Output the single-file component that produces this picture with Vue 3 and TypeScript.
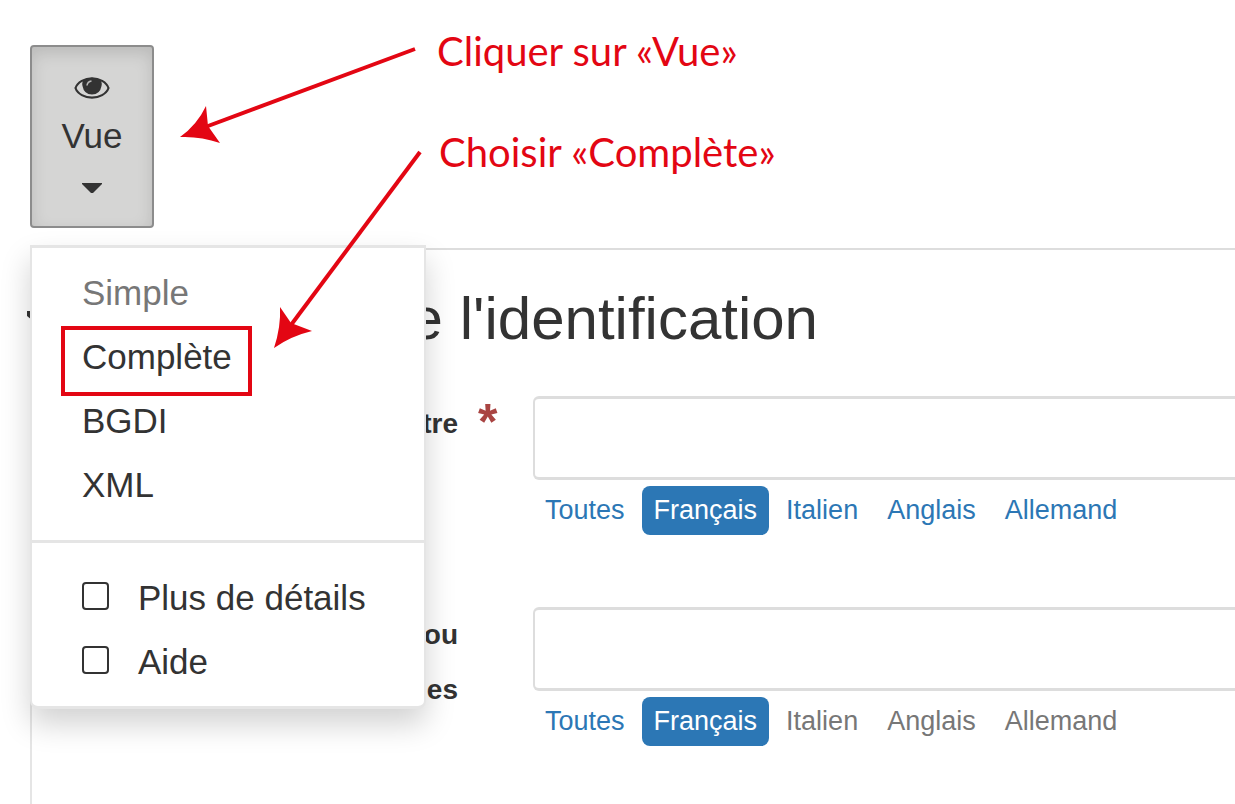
<script setup lang="ts">
import { ref } from 'vue'

interface Field {
  id: string
  lines: string[]
  required: boolean
  muted: boolean
}

const views: string[] = ['Simple', 'Complète', 'BGDI', 'XML']
const languages: string[] = ['Toutes', 'Français', 'Italien', 'Anglais', 'Allemand']
const fields: Field[] = [
  { id: 'title', lines: ['Titre'], required: true, muted: false },
  { id: 'other', lines: ['ou', 'es'], required: false, muted: true },
]
const values = ref<Record<string, string>>({ title: '', other: '' })
const details = ref(false)
const help = ref(false)
</script>

<template>
  <div class="page">
    <header class="toolbar">
      <div class="dropdown">
        <button class="view-button" type="button" aria-haspopup="true" aria-expanded="true">
          <svg class="eye" viewBox="0 0 36 22" aria-hidden="true">
            <path d="M1.500 11C3.500 5 11 1.300 18 1.300S32.500 5 34.500 11C32.500 17 25 20.700 18 20.700S3.500 17 1.500 11Z" fill="none" stroke="#333" stroke-width="2.200" />
            <path d="M10 2.500Q18 -1 26 2.500Q28.500 5 27.500 9Q26 17.500 18 17.500Q10 17.500 8.500 9Q7.500 5 10 2.500Z" fill="#333" />
            <path d="M13 8.500Q13.500 4.500 17.500 4" fill="none" stroke="#b8b8b8" stroke-width="1.600" />
          </svg>
          <span class="view-text">Vue</span>
          <svg class="caret" viewBox="0 0 20 10" aria-hidden="true"><path d="M0 0H20V1L11 10H9L0 1Z" fill="#333" /></svg>
        </button>
        <div class="menu">
          <a v-for="(view, i) in views" :key="view" href="#" class="menu-item" :class="{ current: i === 0 }">{{ view }}</a>
          <hr class="divider" />
          <label class="menu-item check"><input v-model="details" type="checkbox" />Plus de détails</label>
          <label class="menu-item check"><input v-model="help" type="checkbox" />Aide</label>
        </div>
      </div>
    </header>

    <main class="panel">
      <h1 class="legend">
        <svg class="legend-caret" viewBox="0 0 34 17" aria-hidden="true"><path d="M0 0H34V4L19 17H15L0 5Z" fill="#333" /></svg>
        <span class="legend-text">de l'identification</span>
      </h1>
      <div v-for="field in fields" :key="field.id" class="field">
        <label :for="field.id" class="field-label">
          <span v-for="line in field.lines" :key="line">{{ line }}</span>
        </label>
        <span class="star"><template v-if="field.required">*</template></span>
        <div class="control">
          <input :id="field.id" v-model="values[field.id]" type="text" class="text-input" />
          <nav class="pills">
            <a
              v-for="(language, i) in languages"
              :key="language"
              href="#"
              class="pill"
              :class="{ active: i === 1, muted: field.muted && i > 1 }"
            >{{ language }}</a>
          </nav>
        </div>
      </div>
    </main>

    <svg class="notes" width="800" height="420" viewBox="0 0 800 420">
      <g fill="none" stroke="#e30613" stroke-width="4">
        <path d="M415 49L200 129" />
        <path d="M420 152L288 329" />
        <rect x="63" y="328" width="187" height="66" />
      </g>
      <g fill="#e30613">
        <path d="M180 137Q197 125 206 106L208 126L220 143Q200 136 180 137Z" />
        <path d="M274 348Q281 327 280 307L291 323L312 331Q291 336 274 348Z" />
        <text x="437" y="66">Cliquer sur «Vue»</text>
        <text x="439" y="167">Choisir «Complète»</text>
      </g>
    </svg>
  </div>
</template>

<style>
body {
  margin: 0;
  background: #fff;
}
</style>

<style scoped>
.page {
  position: relative;
  display: flex;
  flex-direction: column;
  min-height: 100vh;
  overflow: hidden;
  box-sizing: border-box;
  color: #333;
  font-family: "Liberation Sans", Arial, sans-serif;
}
.toolbar {
  display: flex;
  padding: 45px 30px 20px;
}
.dropdown {
  position: relative;
}
.view-button {
  display: flex;
  flex-direction: column;
  align-items: center;
  box-sizing: border-box;
  width: 124px;
  height: 183px;
  padding: 30px 0 0;
  border: 2px solid #8c8c8c;
  border-radius: 4px;
  background: #d5d5d4;
  box-shadow: inset 0 6px 16px rgba(0, 0, 0, 0.13);
  color: #333;
  font-family: inherit;
  font-size: 35px;
}
.eye {
  width: 36px;
  height: 22px;
}
.view-text {
  line-height: 50px;
  margin: 12px 0 22px;
}
.caret {
  width: 20px;
  height: 10px;
}
.menu {
  position: absolute;
  z-index: 2;
  top: 200px;
  left: 0;
  box-sizing: border-box;
  width: 396px;
  padding: 13px 0 12px;
  border: 2px solid #e5e5e5;
  border-width: 3px 2px;
  border-radius: 0 0 8px 8px;
  background: #fff;
  box-shadow: 0 15px 30px rgba(0, 0, 0, 0.18);
}
.menu-item {
  display: flex;
  align-items: center;
  height: 64px;
  padding-left: 50px;
  color: #333;
  font-size: 35px;
  text-decoration: none;
}
.menu-item.current {
  color: #777;
}
.divider {
  height: 3px;
  margin: 23px 0;
  border: 0;
  background: #e5e5e5;
}
.check {
  gap: 29px;
}
.check input {
  appearance: none;
  box-sizing: border-box;
  width: 27px;
  height: 28px;
  margin: 0 0 4px;
  border: 2px solid #333;
  border-radius: 4px;
}
.panel {
  flex: 1;
  margin-left: 30px;
  border-top: 2px solid #ddd;
  border-left: 2px solid #e5e5e5;
}
.legend {
  display: flex;
  align-items: center;
  height: 70px;
  margin: 34px 0 42px -5px;
  font-size: 60px;
  font-weight: 400;
  line-height: 70px;
}
.legend-caret {
  width: 34px;
  height: 17px;
}
.legend-text {
  width: 757px;
  text-align: right;
}
.field {
  display: grid;
  grid-template-columns: 426px 75px 1fr;
  margin-bottom: 72px;
}
.field-label {
  display: flex;
  flex-direction: column;
  font-size: 28px;
  font-weight: 700;
  line-height: 55px;
  text-align: right;
}
.star {
  padding-left: 20px;
  color: #a94442;
  font-size: 50px;
  font-weight: 700;
  line-height: 52px;
}
.text-input {
  display: block;
  box-sizing: border-box;
  width: 100%;
  height: 84px;
  padding: 0 20px;
  border: 3px solid #ddd;
  border-width: 3px 0 3px 2px;
  border-radius: 6px 0 0 6px;
  background: #fff;
  color: #333;
  font-family: inherit;
  font-size: 35px;
}
.pills {
  display: flex;
  gap: 5px;
  margin-top: 6px;
}
.pill {
  padding: 0 12px;
  border-radius: 8px;
  color: #2c77b5;
  font-size: 27px;
  line-height: 49px;
  text-decoration: none;
}
.pill.muted {
  color: #777;
}
.pill.active {
  background: #2c77b5;
  color: #fff;
}
.notes {
  position: absolute;
  z-index: 3;
  top: 0;
  left: 0;
  pointer-events: none;
  font-family: Lato, "Noto Sans", sans-serif;
  font-size: 40px;
}
</style>
